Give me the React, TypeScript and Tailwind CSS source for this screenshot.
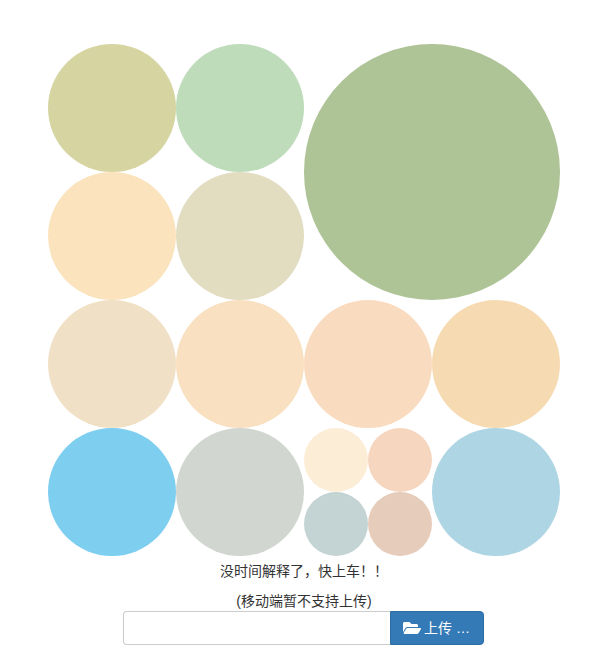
import { FaFolderOpen } from "react-icons/fa";

function C({ className }: { className: string }) {
  return <div className={`rounded-full ${className}`} />;
}

export default function App() {
  return (
    <div className="h-[653px] bg-white pl-12 pt-11 text-[14px] leading-5 text-[#333] font-['Liberation_Sans','Noto_Sans_CJK_SC',sans-serif]">
      <div className="w-[512px]">
        <div className="grid grid-cols-[repeat(4,128px)] grid-rows-[repeat(4,128px)]">
          <C className="bg-[#d6d4a0]" />
          <C className="bg-[#bedbba]" />
          <C className="col-span-2 row-span-2 bg-[#aec396]" />
          <C className="bg-[#fbe3bd]" />
          <C className="bg-[#e2dcc0]" />
          <C className="bg-[#f0e1c6]" />
          <C className="bg-[#f9e0c1]" />
          <C className="bg-[#f9dcc0]" />
          <C className="bg-[#f6dbb2]" />
          <C className="bg-[#7ecef0]" />
          <C className="bg-[#d1d6d0]" />
          <div className="grid grid-cols-2 grid-rows-2">
            <C className="bg-[#fcedd6]" />
            <C className="bg-[#f6d6bf]" />
            <C className="bg-[#c4d3d3]" />
            <C className="bg-[#e6ccbb]" />
          </div>
          <C className="bg-[#add5e3]" />
        </div>
        <p className="mt-[5px] text-center">没时间解释了，快上车！！</p>
        <p className="mt-[10px] text-center">(移动端暂不支持上传)</p>
        <div className="ml-[75px] flex h-[34px] w-[361px]">
          <input className="h-full min-w-0 flex-1 rounded-l border border-r-0 border-[#ccc] bg-white px-3 outline-none" />
          <div className="flex h-full w-[94px] items-center rounded-r border border-[#2e6da4] bg-[#337ab7] pl-3 text-white">
            <FaFolderOpen className="mr-[3px] h-[16px] w-[18px]" />
            <span>上传 …</span>
          </div>
        </div>
      </div>
    </div>
  );
}
